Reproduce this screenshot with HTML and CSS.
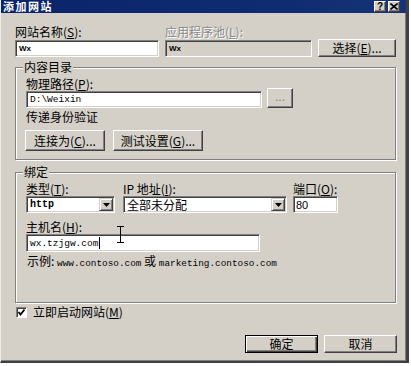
FILE: index.html
```html
<!DOCTYPE html>
<html lang="zh-CN">
<head>
<meta charset="utf-8">
<title>添加网站</title>
<link rel="stylesheet" href="styles.css">
</head>
<body>
<div class="window">
  <div class="titlebar">
    <span class="title">添加网站</span>
    <div class="tb-buttons">
      <span class="tb-btn help">?</span>
      <span class="tb-btn close"><svg width="8" height="7" viewBox="0 0 8 7"><path d="M0.5 0.5 L7.5 6.5 M7.5 0.5 L0.5 6.5" stroke="#000" stroke-width="1.6" fill="none"/></svg></span>
    </div>
  </div>
  <div class="content">
    <div class="row1">
      <label class="lbl">网站名称(<u>S</u>):</label>
      <label class="lbl disabled">应用程序池(<u>L</u>):</label>
      <span></span>
      <div class="field tiny">Wx</div>
      <div class="field tiny readonly">Wx</div>
      <button class="btn pick">选择(<u>E</u>)...</button>
    </div>

    <fieldset class="group g1">
      <legend>内容目录</legend>
      <div class="lbl tight">物理路径(<u>P</u>):</div>
      <div class="pathrow">
        <div class="field mono path">D:\Weixin</div>
        <button class="btn dots">...</button>
      </div>
      <div class="lbl pass">传递身份验证</div>
      <div class="btnrow">
        <button class="btn connect">连接为(<u>C</u>)...</button>
        <button class="btn test">测试设置(<u>G</u>)...</button>
      </div>
    </fieldset>

    <fieldset class="group g2">
      <legend>绑定</legend>
      <div class="bindrow">
        <div class="col c-type">
          <div class="lbl">类型(<u>T</u>):</div>
          <div class="select">
            <span class="sel-text mono bold">http</span>
            <span class="drop"><svg width="7" height="4" viewBox="0 0 7 4"><path d="M0 0 H7 L3.5 4 Z" fill="#000"/></svg></span>
          </div>
        </div>
        <div class="col c-ip">
          <div class="lbl">IP 地址(<u>I</u>):</div>
          <div class="select">
            <span class="sel-text">全部未分配</span>
            <span class="drop"><svg width="7" height="4" viewBox="0 0 7 4"><path d="M0 0 H7 L3.5 4 Z" fill="#000"/></svg></span>
          </div>
        </div>
        <div class="col c-port">
          <div class="lbl">端口(<u>O</u>):</div>
          <div class="field port">80</div>
        </div>
      </div>
      <div class="hostwrap">
        <div class="lbl">主机名(<u>H</u>):</div>
        <div class="field mono host">wx.tzjgw.com<span class="caret"></span></div>
        <svg class="ibeam" width="7" height="17" viewBox="0 0 7 17"><path d="M0 0.5 H7 M3.5 0.5 V16.5 M0 16.5 H7" stroke="#000" stroke-width="1" fill="none"/></svg>
      </div>
      <div class="example">示例: <span class="mono ex">www.contoso.com</span> 或 <span class="mono ex">marketing.contoso.com</span></div>
    </fieldset>

    <div class="checkrow">
      <span class="checkbox"><svg width="9" height="9" viewBox="0 0 9 9"><path d="M1.5 4 L3.5 6.5 L7.5 1.5" stroke="#000" stroke-width="1.8" fill="none"/></svg></span>
      <span class="cblabel">立即启动网站(<u>M</u>)</span>
    </div>

    <div class="footer">
      <button class="btn ok">确定</button>
      <button class="btn cancel">取消</button>
    </div>
  </div>
</div>
</body>
</html>
```

FILE: styles.css
```css
* { box-sizing: border-box; }
html, body { margin: 0; padding: 0; background: #ffffff; }
body {
  font-family: "Noto Sans CJK SC", "Noto Sans", sans-serif;
  font-size: 12px;
  color: #000;
}
u { text-decoration: underline; text-decoration-thickness: 1px; text-underline-offset: 1px; }

.window {
  width: 409px;
  height: 363px;
  background: #d4d0c8;
  border-style: solid;
  border-width: 0 3px 2px 1px;
  border-color: #d4d0c8 #404040 #404040 #f0eee8;
  box-shadow: inset -1px -1px 0 #808080;
}

.titlebar {
  height: 13px;
  background: linear-gradient(to right, #0a246a 0%, #0f2c72 70%, #163477 100%);
  display: flex;
  align-items: center;
  justify-content: space-between;
  padding: 0 6px 0 2px;
}
.title {
  display: block;
  height: 13px;
  overflow: hidden;
  color: #fff;
  font-weight: bold;
  font-size: 11px;
  line-height: 13px;
  letter-spacing: 1.5px;
}
.tb-buttons { display: flex; gap: 2px; }
.tb-btn {
  width: 12px;
  height: 11px;
  background: #d4d0c8;
  border: 1px solid;
  border-color: #fff #404040 #404040 #fff;
  box-shadow: inset -1px -1px 0 #808080;
  display: flex;
  align-items: center;
  justify-content: center;
  font-family: "Liberation Sans", sans-serif;
  font-weight: bold;
  font-size: 10px;
  line-height: 9px;
}

.content { padding: 12px 9px 0 14px; }

.lbl { line-height: 14px; height: 14px; white-space: nowrap; }
.disabled { color: #8a8a8a; text-shadow: 1px 1px 0 #fff; }

.row1 {
  display: grid;
  grid-template-columns: 144px 147px 78px;
  grid-template-rows: 14px 17px;
  column-gap: 6px;
  row-gap: 1px;
}

.field {
  background: #fff;
  border: 1px solid;
  border-color: #808080 #fff #fff #808080;
  box-shadow: inset 1px 1px 0 #404040, inset -1px -1px 0 #d4d0c8;
  height: 17px;
  padding: 0 3px;
  display: flex;
  align-items: center;
  white-space: nowrap;
}
.readonly { background: #d4d0c8; }
.tiny {
  font-family: "Liberation Sans", sans-serif;
  font-size: 8px;
  font-weight: bold;
}
.mono {
  font-family: "Liberation Mono", monospace;
  font-size: 9.5px;
}
.bold { font-weight: bold; }

.btn {
  font-family: "Noto Sans CJK SC", "Noto Sans", sans-serif;
  font-size: 12px;
  color: #000;
  background: #d4d0c8;
  border: 1px solid;
  border-color: #fff #404040 #404040 #fff;
  box-shadow: inset -1px -1px 0 #808080;
  padding: 0;
  margin: 0;
  display: flex;
  align-items: center;
  justify-content: center;
  line-height: 14px;
  white-space: nowrap;
}
.pick { height: 18px; margin-top: -1px; }

.group {
  margin: 0;
  min-width: 0;
  width: 381px;
  border: 1px solid #808080;
  box-shadow: inset 1px 1px 0 #fff, 1px 1px 0 #fff;
  padding: 3px 10px 8px 10px;
}
.group legend {
  padding: 0 1px;
  margin-left: -3px;
  line-height: 14px;
  background: #d4d0c8;
}
.g1 { margin-top: 3px; }
.tight { height: 11px; }
.pathrow { display: flex; gap: 5px; align-items: flex-end; }
.path { width: 236px; height: 17px; }
.dots { width: 26px; height: 20px; color: #808080; font-family: "Liberation Sans", sans-serif; padding-bottom: 3px; }
.pass { margin-top: 2px; }
.btnrow { display: flex; gap: 8px; margin-top: 6px; margin-left: -1px; }
.connect { width: 80px; height: 21px; }
.test { width: 90px; height: 21px; }

.g2 { margin-top: 5px; padding-bottom: 31px; }
.bindrow { display: flex; }
.c-type { width: 89px; }
.c-ip { width: 164px; margin-left: 8px; }
.c-port { width: 45px; margin-left: 6px; }
.select {
  background: #fff;
  border: 1px solid;
  border-color: #808080 #fff #fff #808080;
  box-shadow: inset 1px 1px 0 #404040, inset -1px -1px 0 #d4d0c8;
  height: 17px;
  display: flex;
  align-items: stretch;
  padding: 1px;
}
.sel-text { flex: 1; display: flex; align-items: center; padding-left: 2px; white-space: nowrap; }
.c-type .sel-text { font-size: 10px; }
.drop {
  width: 14px;
  background: #d4d0c8;
  border: 1px solid;
  border-color: #d4d0c8 #404040 #404040 #d4d0c8;
  box-shadow: inset 1px 1px 0 #fff, inset -1px -1px 0 #808080;
  display: flex;
  align-items: center;
  justify-content: center;
}
.port { font-family: "Liberation Sans", sans-serif; font-size: 11px; padding-left: 2px; }

.hostwrap { position: relative; margin-top: 7px; }
.host { width: 234px; height: 18px; }
.caret { display: inline-block; width: 1px; height: 12px; background: #000; margin-left: 1px; }
.ibeam { position: absolute; left: 91px; top: 6px; }
.example { margin-top: 2px; line-height: 14px; white-space: nowrap; padding-left: 1px; }
.ex { font-size: 9.4px; }

.checkrow { display: flex; align-items: center; margin-top: 2px; height: 14px; }
.checkbox {
  width: 11px;
  height: 11px;
  background: #fff;
  border: 1px solid;
  border-color: #808080 #fff #fff #808080;
  box-shadow: inset 1px 1px 0 #404040;
  display: flex;
  align-items: center;
  justify-content: center;
  margin-left: 1px;
}
.cblabel { margin-left: 6px; line-height: 14px; }

.footer { display: flex; justify-content: flex-end; gap: 6px; margin-top: 16px; }
.ok, .cancel { width: 73px; height: 18px; }
.ok { border-color: #000; box-shadow: inset 1px 1px 0 #fff, inset -1px -1px 0 #404040, inset -2px -2px 0 #808080; }
```
